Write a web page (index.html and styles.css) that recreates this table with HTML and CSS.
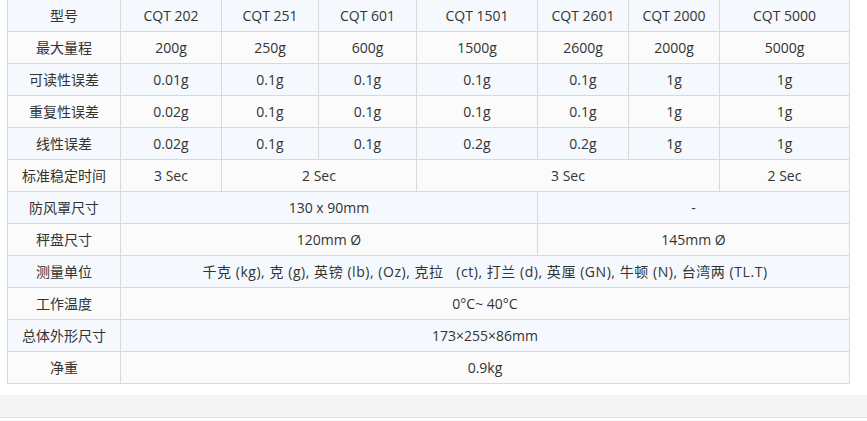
FILE: index.html
```html
<!DOCTYPE html>
<html lang="zh-CN">
<head>
<meta charset="utf-8">
<title>CQT 规格</title>
<link rel="stylesheet" href="styles.css">
</head>
<body>
<div class="wrap">
<table class="spec">
<colgroup>
<col class="c0"><col class="c1"><col class="c2"><col class="c3"><col class="c4"><col class="c5"><col class="c6"><col class="c7">
</colgroup>
<tbody>
<tr class="odd"><td>型号</td><td>CQT 202</td><td>CQT 251</td><td>CQT 601</td><td>CQT 1501</td><td>CQT 2601</td><td>CQT 2000</td><td>CQT 5000</td></tr>
<tr class="even"><td>最大量程</td><td>200g</td><td>250g</td><td>600g</td><td>1500g</td><td>2600g</td><td>2000g</td><td>5000g</td></tr>
<tr class="odd"><td>可读性误差</td><td>0.01g</td><td>0.1g</td><td>0.1g</td><td>0.1g</td><td>0.1g</td><td>1g</td><td>1g</td></tr>
<tr class="even"><td>重复性误差</td><td>0.02g</td><td>0.1g</td><td>0.1g</td><td>0.1g</td><td>0.1g</td><td>1g</td><td>1g</td></tr>
<tr class="odd"><td>线性误差</td><td>0.02g</td><td>0.1g</td><td>0.1g</td><td>0.2g</td><td>0.2g</td><td>1g</td><td>1g</td></tr>
<tr class="even"><td>标准稳定时间</td><td>3 Sec</td><td colspan="2">2 Sec</td><td colspan="3">3 Sec</td><td>2 Sec</td></tr>
<tr class="odd"><td>防风罩尺寸</td><td colspan="4">130 x 90mm</td><td colspan="3">-</td></tr>
<tr class="even"><td>秤盘尺寸</td><td colspan="4">120mm Ø</td><td colspan="3">145mm Ø</td></tr>
<tr class="odd"><td>测量单位</td><td colspan="7" class="units">千克 (kg), 克 (g), 英镑 (lb), (Oz), 克拉&nbsp;&nbsp; (ct), 打兰 (d), 英厘 (GN), 牛顿 (N), 台湾两 (TL.T)</td></tr>
<tr class="even"><td>工作温度</td><td colspan="7">0°C~ 40°C</td></tr>
<tr class="odd"><td>总体外形尺寸</td><td colspan="7">173×255×86mm</td></tr>
<tr class="even"><td>净重</td><td colspan="7">0.9kg</td></tr>
</tbody>
</table>
</div>
<div class="footer-band"></div>
</body>
</html>
```
FILE: styles.css
```css
html, body {
  margin: 0;
  padding: 0;
  background: #ffffff;
}
body {
  font-family: "Open Sans", "Noto Sans CJK SC", sans-serif;
  font-size: 14px;
  color: #333333;
}
.wrap {
  padding-left: 7px;
  margin-top: -1px;
}
.spec {
  border-collapse: collapse;
  table-layout: fixed;
  width: 842px;
}
.c0 { width: 113px; }
.c1 { width: 101px; }
.c2 { width: 97px; }
.c3 { width: 98px; }
.c4 { width: 121px; }
.c5 { width: 91px; }
.c6 { width: 91px; }
.c7 { width: 130px; }
.spec td {
  border: 1px solid #d9d9d9;
  height: 31px;
  padding: 0;
  text-align: center;
  vertical-align: middle;
  line-height: 18px;
  white-space: nowrap;
}
.spec td.units {
  letter-spacing: 0.55px;
}
.spec tr.odd td { background: #f5f9fd; }
.spec tr.even td { background: #fbfbfb; }
.footer-band {
  margin-top: 11px;
  height: 22px;
  background: #f5f5f5;
  border-bottom: 1px solid #e0e0e0;
}
```
